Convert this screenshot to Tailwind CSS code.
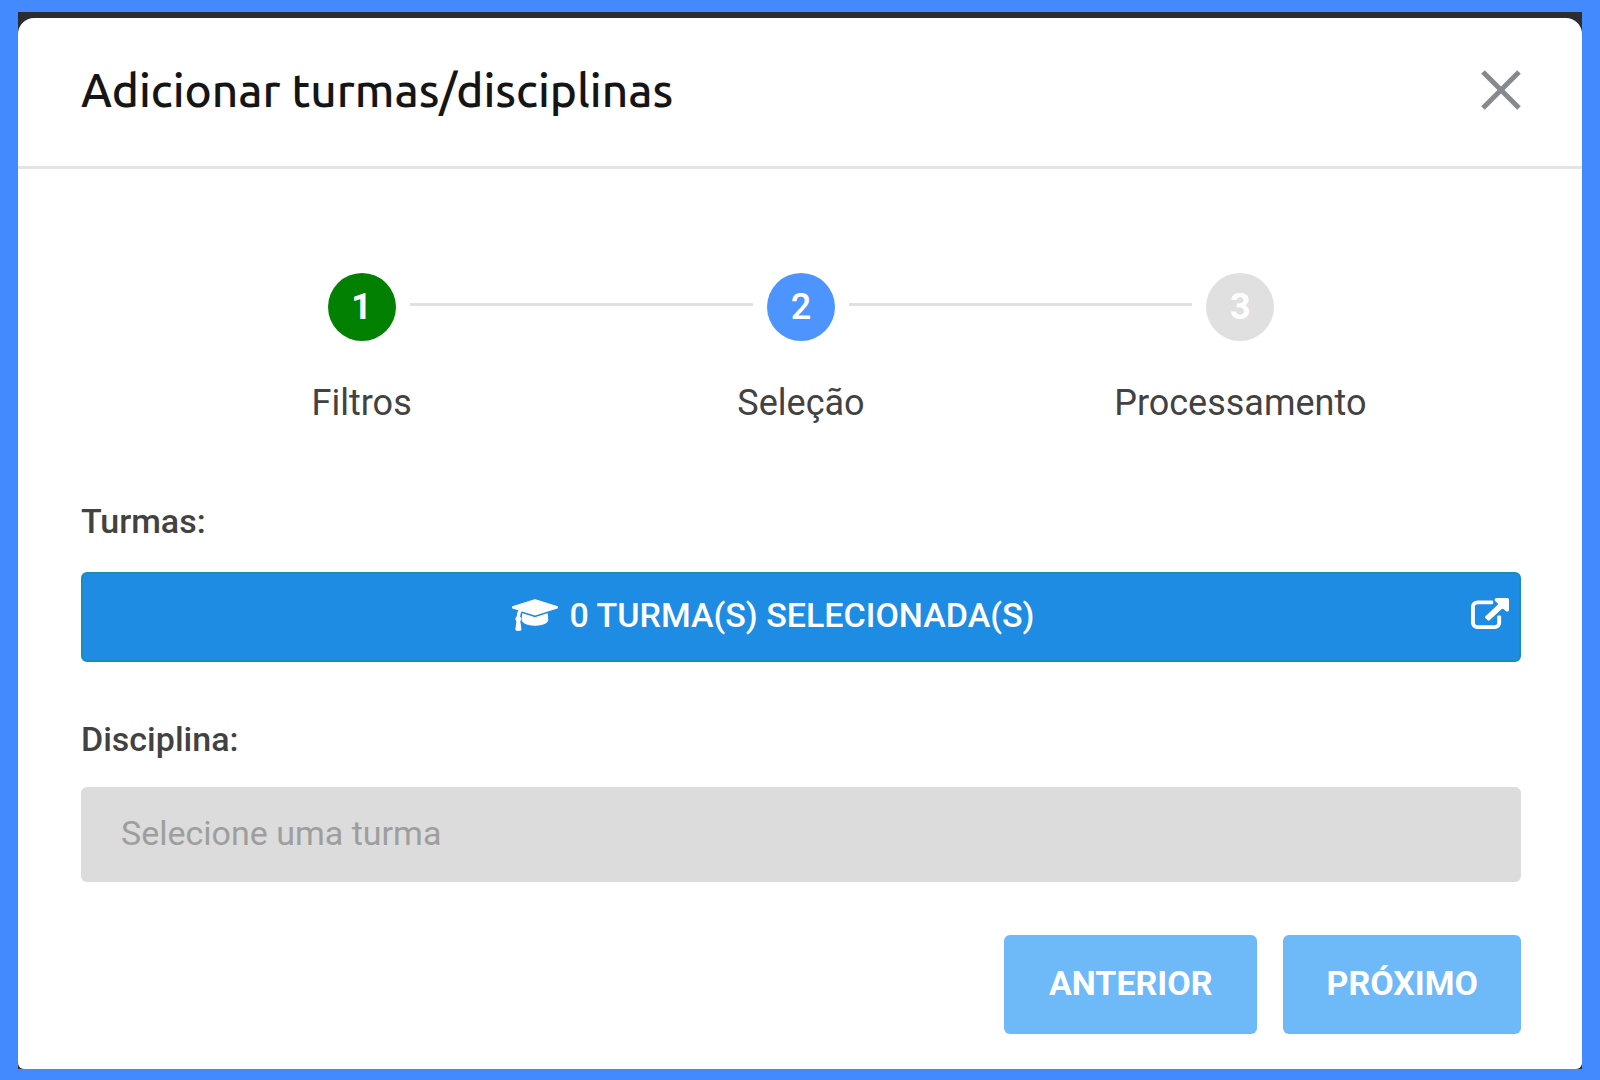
<!DOCTYPE html>
<html lang="pt-BR">
<head>
    <meta charset="UTF-8">
    <meta name="viewport" content="width=device-width, initial-scale=1.0">
    <title>Adicionar turmas/disciplinas</title>
    <script src="https://cdn.jsdelivr.net/npm/@tailwindcss/browser@4"></script>
</head>
<body class="bg-[#448aff] min-h-screen flex flex-col px-[18px] py-3 font-['Roboto',sans-serif] text-[#424242]">
    <div class="bg-[#2b2c2f] flex-1 flex flex-col pt-[6px]">
        <div role="dialog" aria-labelledby="modal-title" class="bg-white flex-1 flex flex-col rounded-t-[16px] rounded-b-[6px]">
            <header class="flex items-center justify-between h-[151px] pl-[63px] pr-[61px] pb-1 border-b-3 border-[#e4e4e4]">
                <h1 id="modal-title" class="font-['Ubuntu','Noto_Sans',sans-serif] font-medium text-[46px] leading-[60px] text-[#151515]">Adicionar turmas/disciplinas</h1>
                <button type="button" id="close-modal" aria-label="Fechar" class="text-[#868a8e]">
                    <svg class="w-10 h-10" viewBox="0 0 40 40" fill="none" stroke="currentColor" stroke-width="5"><path d="M2 2L38 38M38 2L2 38"/></svg>
                </button>
            </header>

            <form id="turmas-form" class="flex flex-col pl-[63px] pr-[61px] pt-[104px] pb-[35px]">
                <ol class="grid grid-cols-3 px-[61px] text-center text-[36px] leading-[48px]">
                    <li>
                        <div class="flex items-center gap-[14px] mb-[38px]">
                            <span class="flex-1"></span>
                            <span class="w-[68px] h-[68px] rounded-full bg-[#028002] text-white font-bold flex items-center justify-center">1</span>
                            <span class="flex-1 h-[3px] mb-[6px] bg-[#e0e0e0]"></span>
                        </div>
                        Filtros
                    </li>
                    <li>
                        <div class="flex items-center gap-[14px] mb-[38px]">
                            <span class="flex-1 h-[3px] mb-[6px] bg-[#e0e0e0]"></span>
                            <span class="w-[68px] h-[68px] rounded-full bg-[#4d94ff] text-white font-medium flex items-center justify-center">2</span>
                            <span class="flex-1 h-[3px] mb-[6px] bg-[#e0e0e0]"></span>
                        </div>
                        Seleção
                    </li>
                    <li>
                        <div class="flex items-center gap-[14px] mb-[38px]">
                            <span class="flex-1 h-[3px] mb-[6px] bg-[#e0e0e0]"></span>
                            <span class="w-[68px] h-[68px] rounded-full bg-[#e0e0e0] text-white font-bold flex items-center justify-center">3</span>
                            <span class="flex-1"></span>
                        </div>
                        Processamento
                    </li>
                </ol>

                <label for="turmas" class="mt-[70px] text-[34px] leading-[48px] font-medium">Turmas:</label>
                <button type="button" id="turmas" class="mt-[27px] h-[90px] flex items-center bg-[#1f8ce3] border-2 border-[#1590b4] rounded-[6px] pl-3 pr-[10px] pb-1 text-white text-[34px] leading-[48px] font-medium">
                    <span class="flex-1 flex items-center justify-center gap-3">
                        <svg class="w-[46px] h-9" viewBox="0 0 2304 1792" fill="currentColor" stroke="currentColor" stroke-width="50"><path d="M1774 836l18 316q4 69-82 128t-235 93.5-323 34.5-323-34.5-235-93.5-82-128l18-316 574 181q22 7 48 7t48-7zm530-324q0 23-22 31l-1120 352q-4 1-10 1t-10-1l-652-206q-43 34-71 111.5t-34 178.5q63 36 63 109 0 69-58 107l58 433q2 14-8 25-9 11-24 11h-192q-15 0-24-11-10-11-8-25l58-433q-58-38-58-107 0-73 65-111 11-207 98-330l-333-104q-22-8-22-31t22-31l1120-352q4-1 10-1t10 1l1120 352q22 8 22 31z"/></svg>
                        0 TURMA(S) SELECIONADA(S)
                    </span>
                    <svg class="w-[38px] h-[31px] ml-5 mb-1" viewBox="-30 -30 1852 1596" preserveAspectRatio="none" fill="currentColor" stroke="currentColor" stroke-width="60"><path d="M1408 928v320q0 119-84.5 203.5t-203.5 84.5h-832q-119 0-203.5-84.5t-84.5-203.5v-832q0-119 84.5-203.5t203.5-84.5h704q14 0 23 9t9 23v64q0 14-9 23t-23 9h-704q-66 0-113 47t-47 113v832q0 66 47 113t113 47h832q66 0 113-47t47-113v-320q0-14 9-23t23-9h64q14 0 23 9t9 23zm384-864v512q0 26-19 45t-45 19-45-19l-176-176-652 652q-10 10-23 10t-23-10l-114-114q-10-10-10-23t10-23l652-652-176-176q-19-19-19-45t19-45 45-19h512q26 0 45 19t19 45z"/></svg>
                </button>

                <label for="disciplina" class="mt-[53px] text-[34px] leading-[48px] font-medium">Disciplina:</label>
                <input type="text" id="disciplina" name="disciplina" placeholder="Selecione uma turma" disabled class="mt-6 h-[95px] w-full rounded-[6px] bg-[#dcdcdc] px-10 pb-1 text-[34px] placeholder:text-[#9e9e9e]">

                <div class="flex justify-end gap-[26px] mt-[53px] text-[34px] leading-[48px] font-bold text-white">
                    <button type="button" id="anterior" class="h-[99px] px-[45px] pb-1 rounded-[6px] bg-[#6eb9f8]">ANTERIOR</button>
                    <button type="submit" id="proximo" class="h-[99px] px-[43px] pb-1 rounded-[6px] bg-[#6eb9f8]">PRÓXIMO</button>
                </div>
            </form>
        </div>
    </div>
</body>
</html>
